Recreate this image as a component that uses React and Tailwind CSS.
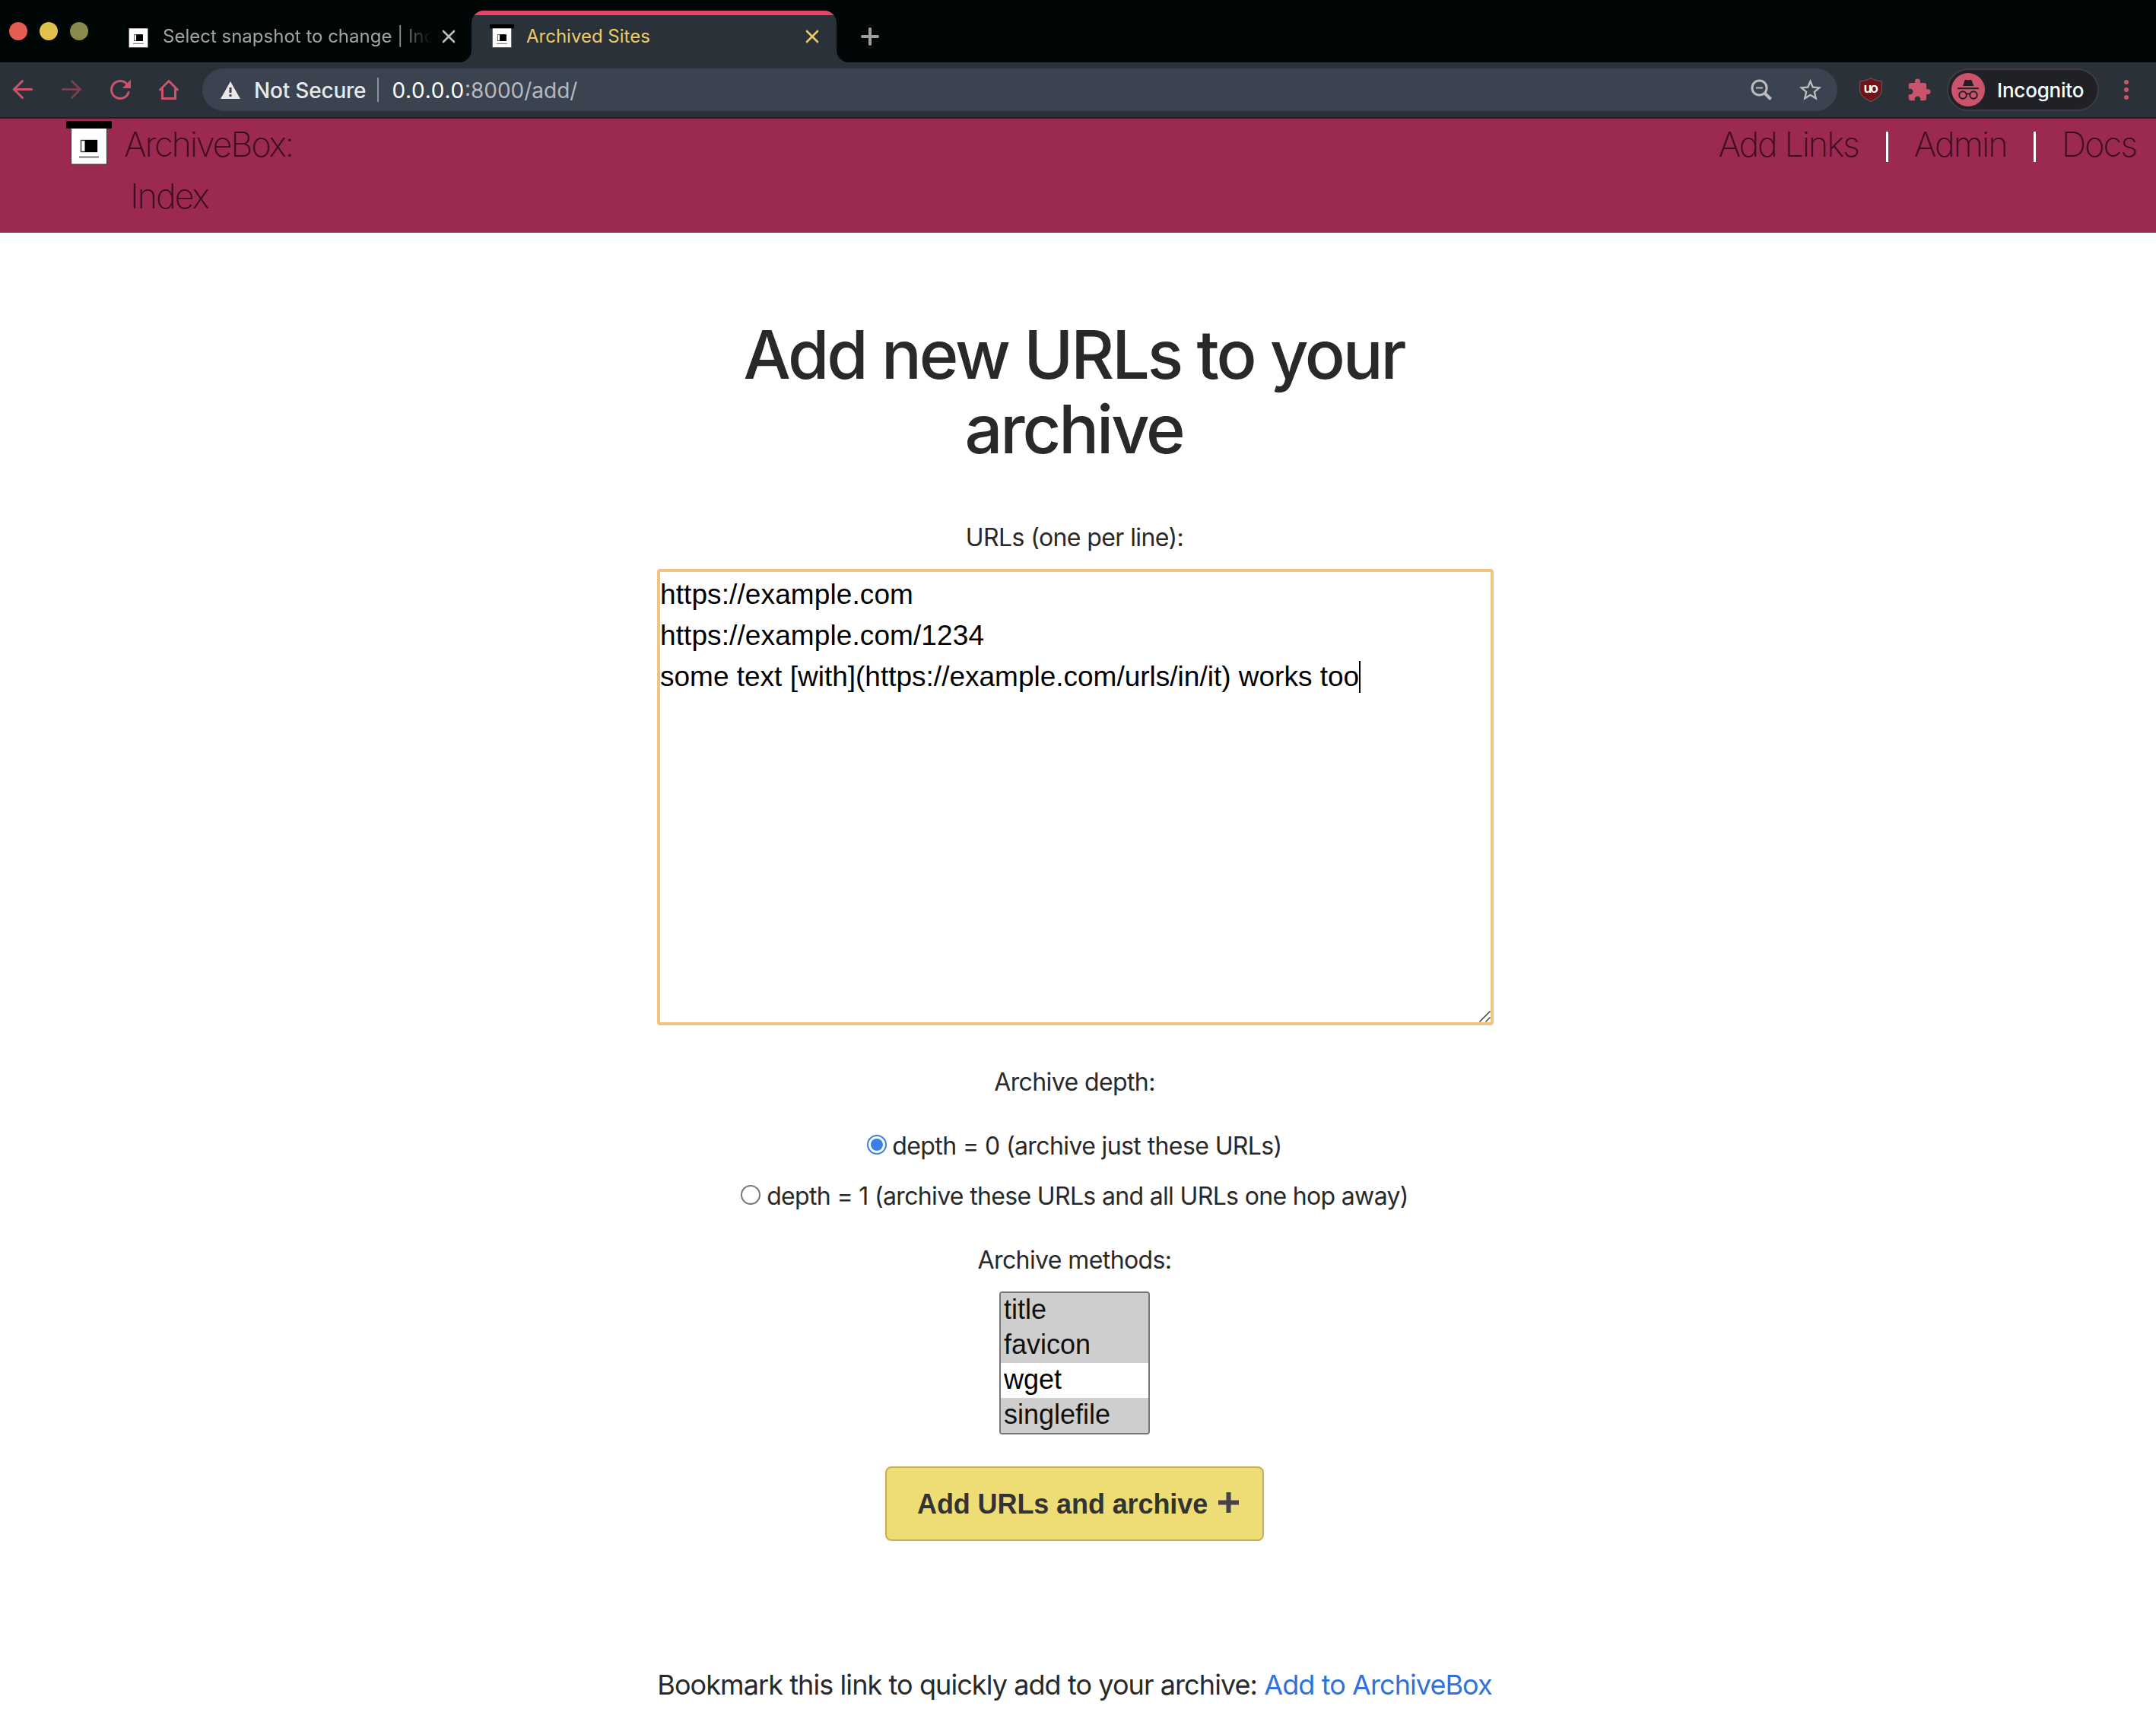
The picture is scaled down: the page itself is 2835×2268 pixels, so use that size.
import { MdExtension, MdStarBorder } from 'react-icons/md'

const methods = [
  { name: 'title', selected: true },
  { name: 'favicon', selected: true },
  { name: 'wget', selected: false },
  { name: 'singlefile', selected: true },
]

const depths = [
  { label: 'depth = 0 (archive just these URLs)', checked: true },
  { label: 'depth = 1 (archive these URLs and all URLs one hop away)', checked: false },
]

function BoxLogo({ className }) {
  return (
    <svg className={className} viewBox="0 0 60 58">
      <rect x="6.5" y="9" width="47" height="48" fill="#fff" stroke="#3a3a3a" strokeWidth="1" />
      <rect x="0" y="0" width="60" height="10" rx="1.5" fill="#000" />
      <rect x="19.5" y="25.5" width="21" height="15" fill="#fff" stroke="#333" strokeWidth="1.4" />
      <rect x="24.5" y="25" width="16.5" height="16" fill="#000" />
      <rect x="17" y="46.5" width="26" height="2" fill="#777" />
    </svg>
  )
}

function CloseIcon({ className }) {
  return (
    <svg className={className} width="18" height="18" viewBox="0 0 18 18" fill="none" stroke="currentColor" strokeWidth="2.6" strokeLinecap="round">
      <path d="M2 2l14 14M16 2L2 16" />
    </svg>
  )
}

function TabStrip() {
  return (
    <div className="flex h-[82px] items-end bg-[#000706]">
      <div className="flex h-[82px] items-center gap-4 pl-3">
        <span className="size-6 rounded-full bg-[#e35d54]" />
        <span className="size-6 rounded-full bg-[#dfc14b]" />
        <span className="size-6 rounded-full bg-[#8a8a50]" />
      </div>
      <div className="ml-[50px] flex h-[68px] w-[438px] items-center pb-[1px]">
        <BoxLogo className="h-[31px] w-8" />
        <span className="ml-4 w-[354px] overflow-hidden text-2xl whitespace-nowrap text-[#a3a3a3] [mask-image:linear-gradient(to_right,#000_86%,transparent_100%)]">
          Select snapshot to change | Index
        </span>
        <CloseIcon className="ml-[13px] text-[#bdbdbd]" />
      </div>
      <div className="size-4 bg-[#2a3138]">
        <div className="size-4 rounded-br-full bg-[#000706]" />
      </div>
      <div className="h-[68px] w-[480px] overflow-hidden rounded-t-2xl bg-[#2a3138]">
        <div className="h-1.5 bg-[#e84368]" />
        <div className="flex h-[55px] items-center pl-6 text-[#edcb62]">
          <BoxLogo className="h-[31px] w-8" />
          <span className="ml-4 text-2xl">Archived Sites</span>
          <CloseIcon className="mr-[23px] ml-auto" />
        </div>
      </div>
      <div className="size-4 bg-[#2a3138]">
        <div className="size-4 rounded-bl-full bg-[#000706]" />
      </div>
      <div className="flex h-[68px] items-center pl-4">
        <svg width="24" height="24" viewBox="0 0 24 24" stroke="#a0a0a0" strokeWidth="4" strokeLinecap="round">
          <path d="M12 2v20M2 12h20" />
        </svg>
      </div>
    </div>
  )
}

function Toolbar() {
  return (
    <div className="flex h-[74px] items-center border-b-2 border-[#202127] bg-[#2a3138] text-[28px] leading-none">
      <div className="flex items-center gap-[36px] pl-[16px] text-[#cb536b]">
        <svg width="28" height="28" viewBox="0 0 28 28" fill="none" stroke="currentColor" strokeWidth="3" strokeLinecap="round">
          <path d="M25.5 13.5H2.5M13.5 2.5L2.5 13.5L13.5 24.5" />
        </svg>
        <svg width="28" height="28" viewBox="0 0 28 28" fill="none" stroke="#773f4f" strokeWidth="3" strokeLinecap="round">
          <path d="M2.5 13.5H25.5M14.5 2.5L25.5 13.5L14.5 24.5" />
        </svg>
        <svg width="28" height="28" viewBox="0 0 28 28" fill="none" stroke="currentColor" strokeWidth="3" strokeLinecap="round">
          <path d="M25 17.5A11.5 11.5 0 1 1 22.5 6.2" />
          <path d="M28 0.5V12H17z" fill="currentColor" stroke="none" />
        </svg>
        <svg width="28" height="28" viewBox="0 0 28 28" fill="none" stroke="currentColor" strokeWidth="3" strokeLinecap="round">
          <path d="M2.5 14L14 2.5L25.5 14M5.5 12.5V25.5H22.5V12.5" />
        </svg>
      </div>
      <div className="ml-[30px] flex h-14 w-[2150px] items-center rounded-full bg-[#3a434f]">
        <svg className="ml-6" width="26" height="23" viewBox="0 0 26 23">
          <path d="M13 0L26 23H0z" fill="#e8e8e8" />
          <path d="M11.5 8h3v7h-3zM11.5 17h3v3h-3z" fill="#3a434f" />
        </svg>
        <span className="ml-[18px] pt-px font-medium tracking-[-0.2px] text-[#e8e9eb]">Not Secure</span>
        <span className="ml-[15px] h-8 w-0.5 bg-[#8b929a]" />
        <span className="ml-[17px] pt-px tracking-[0.7px] text-white">0.0.0.0</span>
        <span className="pt-px text-[#b5babf]">:8000/add/</span>
        <svg className="ml-auto" width="29" height="28" viewBox="0 0 29 28" fill="none" stroke="#bcbcbc">
          <circle cx="11.5" cy="11.5" r="9.6" strokeWidth="3" />
          <path d="M18.5 18.5L26.5 26.5" strokeWidth="4" />
          <path d="M7 11.5h9" strokeWidth="2" />
        </svg>
        <MdStarBorder className="mr-[18px] ml-8 size-[35px] text-[#bcbcbc]" />
      </div>
      <svg className="ml-[29px]" width="30" height="32" viewBox="0 0 30 32">
        <path d="M15 0.5C10.5 3.5 6 4.5 1 4.5C0.5 13 0 18.5 2.5 22.5C5 26.5 9.5 28.5 15 31.5C20.5 28.5 25 26.5 27.5 22.5C30 18.5 29.5 13 29 4.5C24 4.5 19.5 3.5 15 0.5z" fill="#701318" stroke="#6a6064" strokeWidth="1" />
        <text x="14" y="20" textAnchor="middle" fill="#fff" fontSize="18" fontWeight="600" letterSpacing="-2.5">uo</text>
      </svg>
      <MdExtension className="ml-[32px] size-[33px] text-[#cb536b]" />
      <div className="ml-[20px] flex h-14 w-[200px] items-center rounded-full border-2 border-[#3e3c42] bg-[#202127] pl-1">
        <svg width="44" height="44" viewBox="0 0 44 44" fill="none" stroke="#202127">
          <circle cx="22" cy="22" r="22" fill="#cb536b" stroke="none" />
          <path d="M15 17L17.5 9.5Q18.5 8.5 20 9L22 9.6L24 9Q25.5 8.5 26.5 9.5L29.5 17z" fill="#202127" stroke="none" />
          <path d="M8 20.2H36" strokeWidth="2" />
          <circle cx="15" cy="29" r="4.8" strokeWidth="2" />
          <circle cx="29" cy="29" r="4.8" strokeWidth="2" />
          <path d="M19.5 28Q22 26.5 24.5 28" strokeWidth="2" />
        </svg>
        <span className="ml-[16px] pt-px text-[26px] font-medium tracking-[-0.2px] text-white">Incognito</span>
      </div>
      <div className="ml-[33px] flex flex-col gap-1">
        <span className="size-1.5 rounded-full bg-[#cb536b]" />
        <span className="size-1.5 rounded-full bg-[#cb536b]" />
        <span className="size-1.5 rounded-full bg-[#cb536b]" />
      </div>
    </div>
  )
}

function SiteHeader() {
  return (
    <header className="flex h-[150px] items-start justify-between bg-[#9b2950] pr-[26px] pl-[87px] text-[45px] leading-[68px] font-extralight tracking-[-2px] text-[#3a0b20]">
      <div className="flex items-start">
        <BoxLogo className="mt-[3px] h-[58px] w-[60px]" />
        <div className="ml-[16px]">
          <div className="tracking-[-2.1px]">ArchiveBox:</div>
          <div className="pl-2">Index</div>
        </div>
      </div>
      <nav className="flex items-start gap-[35px]">
        <a className="mr-px tracking-[-2px]">Add Links</a>
        <span className="mt-[17px] h-10 w-[3px] bg-white" />
        <a className="-ml-px tracking-[-1.9px]">Admin</a>
        <span className="mt-[17px] h-10 w-[3px] bg-white" />
        <a className="-ml-px tracking-[-1.9px]">Docs</a>
      </nav>
    </header>
  )
}

function UrlBox() {
  return (
    <div className="relative mt-[21px] h-[600px] w-[1100px] rounded-[4px] border-4 border-[#efc581] pt-[3px] font-['Liberation_Sans',Arial,sans-serif] text-[37px] leading-[54px] tracking-normal text-black">
      <div className="tracking-[0.1px]">https://example.com</div>
      <div className="tracking-[0.1px]">https://example.com/1234</div>
      <div className="flex items-center">
        some text [with](https://example.com/urls/in/it) works too
        <span className="h-[42px] w-0.5 bg-black" />
      </div>
      <svg className="absolute right-0 bottom-0" width="15" height="15" viewBox="0 0 15 15" stroke="#555" strokeWidth="1.6">
        <path d="M0.5 14.5L14.5 0.5M8.5 14.5L14.5 8.5" />
      </svg>
    </div>
  )
}

export default function App() {
  return (
    <div className="h-[2268px] w-[2835px] overflow-hidden bg-white font-[Inter,sans-serif]">
      <TabStrip />
      <Toolbar />
      <SiteHeader />
      <main className="flex flex-col items-center pt-[111px] pr-[7px] text-[32px] leading-10 tracking-[-0.6px] text-[#292929]">
        <h1 className="mr-1 w-[900px] text-center text-[88px] leading-[98px] font-medium tracking-[-3.1px]">Add new URLs to your archive</h1>
        <label className="mt-[74px] mr-0.5">URLs (one per line):</label>
        <UrlBox />

        <label className="mt-[55px] mr-0.5">Archive depth:</label>
        <div className="mt-11 mr-0.5 flex flex-col items-center gap-[26px]">
          {depths.map(d => (
            <label key={d.label} className={d.checked ? 'flex items-center' : 'flex items-center tracking-[-0.66px]'}>
              <span
                className={
                  d.checked
                    ? 'mr-[7px] mb-1 flex size-[26px] items-center justify-center rounded-full border-2 border-[#3b7fe8] bg-white'
                    : 'mr-2 mb-1 size-[26px] rounded-full border-2 border-[#767676] bg-white'
                }
              >
                {d.checked && <span className="size-4 rounded-full bg-[#3b7fe8]" />}
              </span>
              {d.label}
            </label>
          ))}
        </div>

        <label className="mt-11 mr-0.5">Archive methods:</label>
        <div className="mt-[21px] mr-0.5 w-[198px] overflow-hidden rounded-[4px] border-2 border-[#767676] font-['Liberation_Sans',Arial,sans-serif] text-[36px] leading-[43px] tracking-normal">
          {methods.map(m => (
            <div key={m.name} className={m.selected ? 'h-[46px] bg-[#cecece] pl-1 text-[#101010]' : 'h-[46px] bg-white pl-1 text-black'}>
              {m.name}
            </div>
          ))}
        </div>

        <button className="mt-[42px] mr-0.5 flex h-[98px] w-[498px] items-center rounded-lg border-2 border-[#c6ae58] bg-[#eedd75] pt-0.5 pl-[40px] font-['Liberation_Sans',Arial,sans-serif] text-[36px] font-bold tracking-[-0.1px] text-[#333]">
          Add URLs and archive
          <svg className="mb-1.5 ml-[14px]" width="27" height="27" viewBox="0 0 27 27" stroke="#46434f" strokeWidth="6">
            <path d="M13.5 0v27M0 13.5h27" />
          </svg>
        </button>

        <p className="mt-[162px] mr-0.5 text-[36px] leading-[54px] tracking-[-0.92px]">
          Bookmark this link to quickly add to your archive: <a className="text-[#2f73da]">Add to ArchiveBox</a>
        </p>
      </main>
    </div>
  )
}
